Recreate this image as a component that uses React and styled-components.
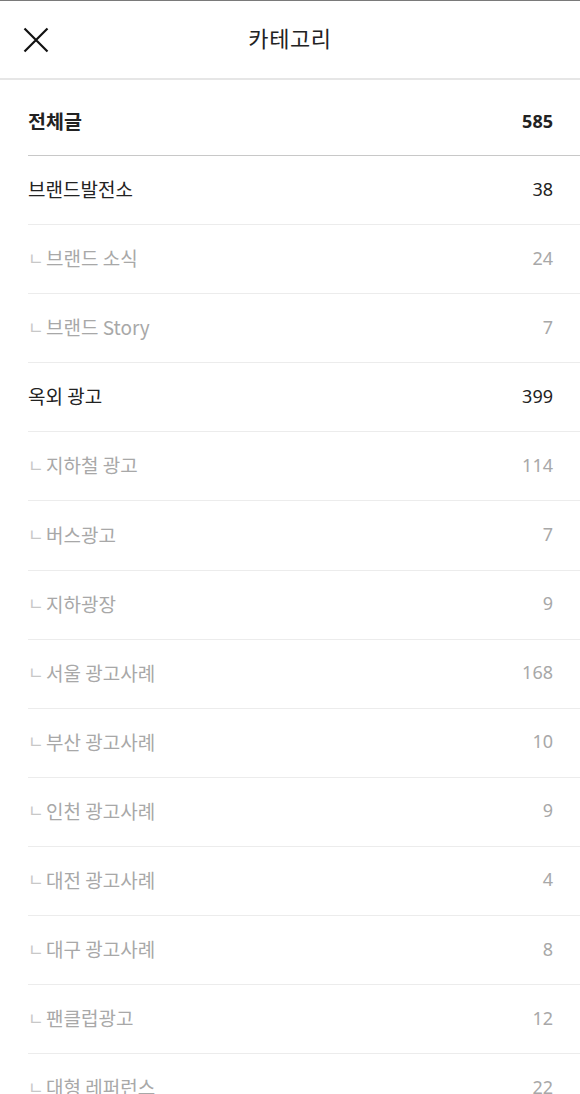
import React from "react";
import styled, { createGlobalStyle } from "styled-components";

const Global = createGlobalStyle`
  html, body { margin: 0; padding: 0; background: #fff; }
  body { font-family: "Noto Sans CJK KR", "Noto Sans", sans-serif; overflow: hidden; }
  * { box-sizing: border-box; }
`;

const Page = styled.div`
  width: 580px;
  height: 1094px;
  overflow: hidden;
  border-top: 1px solid #7a7a7a;
  background: #fff;
`;

const Header = styled.header`
  position: relative;
  height: 79px;
  display: flex;
  align-items: center;
  justify-content: center;
  border-bottom: 2px solid #e6e6e6;
`;

const CloseButton = styled.button`
  position: absolute;
  left: 21px;
  top: 24px;
  width: 30px;
  height: 30px;
  padding: 0;
  border: 0;
  background: none;
  display: flex;
  align-items: center;
  justify-content: center;
`;

const Title = styled.h1`
  margin: 0 0 5px;
  font-size: 22px;
  font-weight: 400;
  color: #222;
  letter-spacing: 0.6px;
`;

const List = styled.ul`
  list-style: none;
  margin: 0 0 0 28px;
  padding: 0;
`;

const Row = styled.li`
  display: flex;
  align-items: center;
  justify-content: space-between;
  height: ${(p) => (p.$total ? "76px" : "69.1px")};
  padding-right: 27px;
  padding-top: ${(p) => (p.$total ? "9px" : "0")};
  padding-bottom: 3px;
  border-bottom: 1px solid ${(p) => (p.$total ? "#c8c8c8" : "#ececec")};
  font-size: ${(p) => (p.$total ? "19.5px" : "19px")};
  color: ${(p) => (p.$sub ? "#a8a8a8" : "#222")};
  font-weight: ${(p) => (p.$total ? 700 : 400)};
`;

const Name = styled.span`
  display: flex;
  align-items: center;
`;

const Branch = styled.span`
  font-size: 17px;
  color: #c8c8c8;
  width: 18px;
  margin-top: -1px;
`;

const Count = styled.span`
  font-family: "Noto Sans", sans-serif;
  font-size: 18px;
`;

const rows = [
  { name: "브랜드발전소", count: 38 },
  { name: "브랜드 소식", count: 24, sub: true },
  { name: "브랜드 Story", count: 7, sub: true },
  { name: "옥외 광고", count: 399 },
  { name: "지하철 광고", count: 114, sub: true },
  { name: "버스광고", count: 7, sub: true },
  { name: "지하광장", count: 9, sub: true },
  { name: "서울 광고사례", count: 168, sub: true },
  { name: "부산 광고사례", count: 10, sub: true },
  { name: "인천 광고사례", count: 9, sub: true },
  { name: "대전 광고사례", count: 4, sub: true },
  { name: "대구 광고사례", count: 8, sub: true },
  { name: "팬클럽광고", count: 12, sub: true },
  { name: "대형 레퍼런스", count: 22, sub: true },
];

export default function App() {
  return (
    <Page>
      <Global />
      <Header>
        <CloseButton aria-label="닫기">
          <svg width="26" height="26" viewBox="0 0 26 26">
            <path d="M1.5 1.5 L24.5 24.5 M24.5 1.5 L1.5 24.5" stroke="#111" strokeWidth="2.2" fill="none" />
          </svg>
        </CloseButton>
        <Title>카테고리</Title>
      </Header>
      <List>
        <Row $total>
          <Name>전체글</Name>
          <Count>585</Count>
        </Row>
        {rows.map((r) => (
          <Row key={r.name} $sub={r.sub}>
            <Name>
              {r.sub && <Branch>ㄴ</Branch>}
              {r.name}
            </Name>
            <Count>{r.count}</Count>
          </Row>
        ))}
      </List>
    </Page>
  );
}
